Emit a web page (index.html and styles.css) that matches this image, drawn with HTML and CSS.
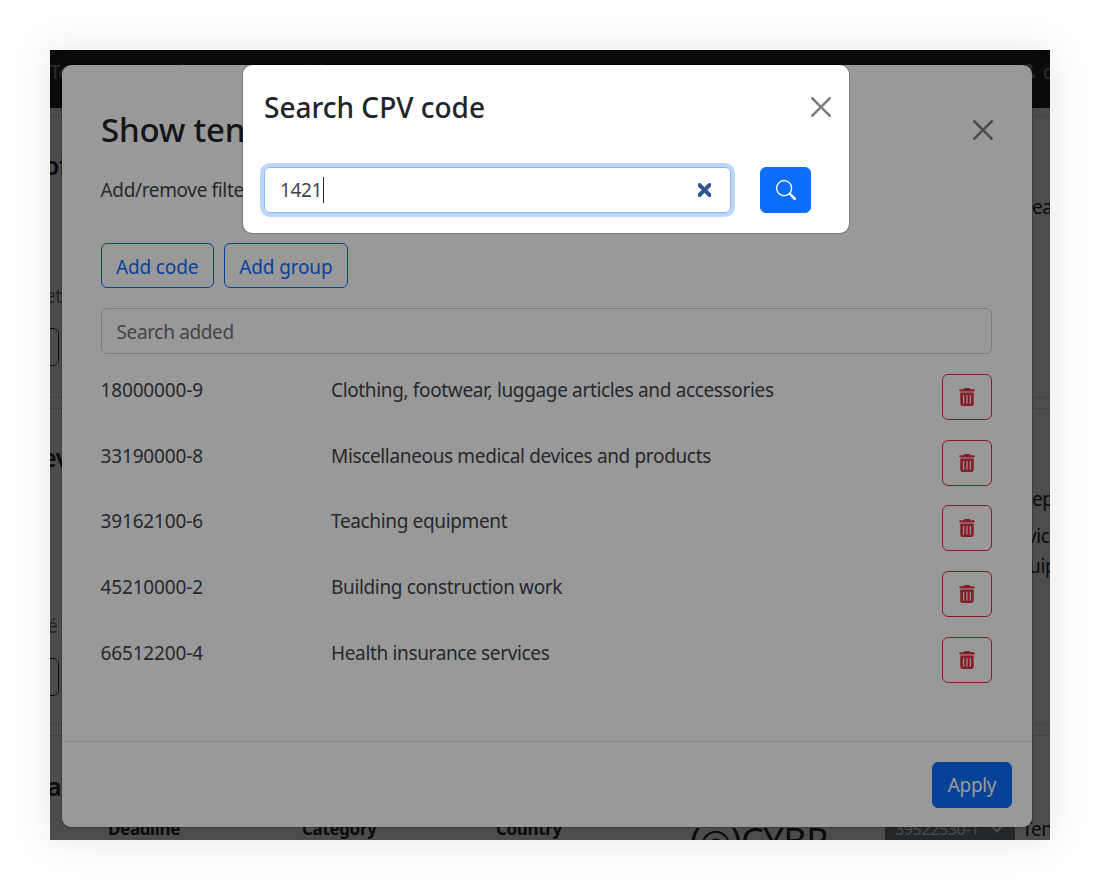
FILE: index.html
```html
<!DOCTYPE html>
<html lang="en">
<head>
    <meta charset="UTF-8">
    <title>Search CPV code</title>
    <link rel="stylesheet" href="styles.css">
</head>
<body>
    <div class="screen">
        <div class="page">
            <nav class="page-nav">
                <span>Te</span>
                <span class="page-nav__gap">About us</span>
                <span>Pricing</span>
                <span>Contact</span>
                <span class="page-nav__user">Lo</span>
                <svg class="page-nav__icon" viewBox="0 0 16 16"><path d="M8 8a3.5 3.5 0 1 0 0-7 3.5 3.5 0 0 0 0 7zm-6 7c0-3 2.5-5.500 6-5.500s6 2.500 6 5.500z"/></svg>
                <span class="page-nav__tail">c</span>
            </nav>
            <section class="page-section page-section--first">
                <div class="page-left">
                    <div class="page-heading page-heading--first">of</div>
                    <div class="page-label page-label--first">et</div>
                    <div class="page-select"></div>
                </div>
                <div class="page-right">
                    <div class="page-text page-text--first">ea</div>
                </div>
            </section>
            <section class="page-section page-section--second">
                <div class="page-left">
                    <div class="page-heading page-heading--second">ev</div>
                    <div class="page-label page-label--second">é</div>
                    <div class="page-select"></div>
                </div>
                <div class="page-right">
                    <div class="page-text page-text--second">ep</div>
                    <div class="page-text page-text--third">vic</div>
                    <div class="page-text page-text--fourth">uip</div>
                </div>
            </section>
            <section class="page-section page-section--third">
                <div class="page-heading page-heading--third">a</div>
                <div class="tender-head">
                    <span class="tender-col">Deadline</span>
                    <span class="tender-col">Category</span>
                    <span class="tender-col tender-col--country">Country</span>
                    <span class="tender-logo">(◎)CYBR</span>
                    <span class="tender-code">39522530-1 <i class="tender-chevron"></i></span>
                    <span class="tender-tail">Ten</span>
                </div>
            </section>
        </div>

        <div class="backdrop backdrop--first"></div>
        <div class="modal modal--filter">
            <header class="filter-head">
                <h2 class="filter-title">Show tenders by CPV</h2>
                <button class="btn-close" type="button">
                    <svg viewBox="0 0 16 16" width="20" height="20"><path d="M.293.293a1 1 0 0 1 1.414 0L8 6.586 14.293.293a1 1 0 1 1 1.414 1.414L9.414 8l6.293 6.293a1 1 0 0 1-1.414 1.414L8 9.414l-6.293 6.293a1 1 0 0 1-1.414-1.414L6.586 8 .293 1.707a1 1 0 0 1 0-1.414"/></svg>
                </button>
            </header>
            <div class="filter-body">
                <p class="filter-hint">Add/remove filters</p>
                <div class="filter-actions">
                    <button class="btn btn--outline" type="button">Add code</button>
                    <button class="btn btn--outline" type="button">Add group</button>
                </div>
                <input class="filter-search" type="text" placeholder="Search added">
                <div class="code-list">
                    <div class="code-row">
                        <span class="code-row__code">18000000-9</span>
                        <span class="code-row__name">Clothing, footwear, luggage articles and accessories</span>
                        <button class="btn btn--danger" type="button"><svg class="trash" viewBox="0 0 448 512"><use href="#trash-icon"/></svg></button>
                    </div>
                    <div class="code-row">
                        <span class="code-row__code">33190000-8</span>
                        <span class="code-row__name">Miscellaneous medical devices and products</span>
                        <button class="btn btn--danger" type="button"><svg class="trash" viewBox="0 0 448 512"><use href="#trash-icon"/></svg></button>
                    </div>
                    <div class="code-row">
                        <span class="code-row__code">39162100-6</span>
                        <span class="code-row__name">Teaching equipment</span>
                        <button class="btn btn--danger" type="button"><svg class="trash" viewBox="0 0 448 512"><use href="#trash-icon"/></svg></button>
                    </div>
                    <div class="code-row">
                        <span class="code-row__code">45210000-2</span>
                        <span class="code-row__name">Building construction work</span>
                        <button class="btn btn--danger" type="button"><svg class="trash" viewBox="0 0 448 512"><use href="#trash-icon"/></svg></button>
                    </div>
                    <div class="code-row">
                        <span class="code-row__code">66512200-4</span>
                        <span class="code-row__name">Health insurance services</span>
                        <button class="btn btn--danger" type="button"><svg class="trash" viewBox="0 0 448 512"><use href="#trash-icon"/></svg></button>
                    </div>
                </div>
            </div>
            <footer class="filter-foot">
                <button class="btn btn--primary btn--apply" type="button">Apply</button>
            </footer>
        </div>

        <div class="backdrop backdrop--second"></div>
        <div class="modal modal--search">
            <header class="search-head">
                <h2 class="search-title">Search CPV code</h2>
                <button class="btn-close" type="button">
                    <svg viewBox="0 0 16 16" width="20" height="20"><path d="M.293.293a1 1 0 0 1 1.414 0L8 6.586 14.293.293a1 1 0 1 1 1.414 1.414L9.414 8l6.293 6.293a1 1 0 0 1-1.414 1.414L8 9.414l-6.293 6.293a1 1 0 0 1-1.414-1.414L6.586 8 .293 1.707a1 1 0 0 1 0-1.414"/></svg>
                </button>
            </header>
            <div class="search-body">
                <div class="search-field">
                    <span class="search-field__value">1421</span><span class="search-field__caret"></span>
                    <svg class="search-field__clear" viewBox="0 0 320 512"><path d="M310.6 150.6c12.5-12.5 12.5-32.8 0-45.3s-32.8-12.5-45.3 0L160 210.7 54.6 105.4c-12.5-12.5-32.8-12.5-45.3 0s-12.5 32.8 0 45.3L114.7 256 9.4 361.4c-12.5 12.5-12.5 32.8 0 45.3s32.8 12.5 45.3 0L160 301.3 265.4 406.6c12.5 12.5 32.8 12.5 45.3 0s12.5-32.8 0-45.3L205.3 256 310.6 150.6z"/></svg>
                </div>
                <button class="btn btn--primary btn--search" type="button">
                    <svg viewBox="0 0 16 16" width="20" height="20"><path d="M11.742 10.344a6.500 6.500 0 1 0-1.397 1.398h-.001c.03.04.062.078.098.115l3.850 3.850a1 1 0 0 0 1.415-1.414l-3.850-3.850a1.007 1.007 0 0 0-.115-.1zM12 6.500a5.500 5.500 0 1 1-11 0 5.500 5.500 0 0 1 11 0z"/></svg>
                </button>
            </div>
        </div>
    </div>

    <svg class="icon-defs" width="0" height="0">
        <symbol id="trash-icon" viewBox="0 0 448 512">
            <path d="M135.2 17.7C140.6 6.8 151.7 0 163.8 0H284.2c12.1 0 23.2 6.8 28.6 17.7L320 32h96c17.7 0 32 14.3 32 32s-14.3 32-32 32H32C14.3 96 0 81.7 0 64S14.3 32 32 32h96l7.2-14.3zM32 128H416V448c0 35.3-28.7 64-64 64H96c-35.3 0-64-28.7-64-64V128zm96 64c-8.8 0-16 7.2-16 16V432c0 8.8 7.2 16 16 16s16-7.2 16-16V208c0-8.8-7.2-16-16-16zm96 0c-8.8 0-16 7.2-16 16V432c0 8.8 7.2 16 16 16s16-7.2 16-16V208c0-8.8-7.2-16-16-16zm96 0c-8.8 0-16 7.2-16 16V432c0 8.8 7.2 16 16 16s16-7.2 16-16V208c0-8.8-7.2-16-16-16z"/>
        </symbol>
    </svg>
</body>
</html>
```

FILE: styles.css
```css
* {
    box-sizing: border-box;
}

body {
    margin: 0;
    padding: 50px;
    background-color: white;
    color: #212529;
    font-family: "Noto Sans", "Open Sans", sans-serif;
    font-size: 19px;
    line-height: 30px;
    letter-spacing: -0.35px;
}

.screen {
    position: relative;
    width: 1000px;
    height: 790px;
    overflow: hidden;
    box-shadow: 0 0 40px rgba(0, 0, 0, 0.1);
    isolation: isolate;
}

.icon-defs {
    position: absolute;
}

/* page behind the dialogs */
.page {
    height: 100%;
    background-color: #ffffff;
}

.page-nav {
    display: flex;
    gap: 40px;
    height: 58px;
    padding: 7px 0 0 0;
    background-color: #212529;
    color: rgba(255, 255, 255, 0.55);
}

.page-nav__gap {
    margin-left: 60px;
}

.page-nav__user {
    margin-left: auto;
    margin-right: 10px;
}

.page-nav__icon {
    width: 16px;
    height: 18px;
    margin: 5px 0 0 0;
    fill: rgba(255, 255, 255, 0.55);
}

.page-nav__tail {
    margin-right: 0;
    margin-left: -34px;
    width: 7px;
}

.page-section {
    display: flex;
    justify-content: space-between;
    border-top: 1px solid #dee2e6;
    border-bottom: 1px solid #dee2e6;
}

.page-section--first {
    height: 283px;
    margin-top: 7px;
}

.page-section--second {
    height: 317px;
    margin-top: 10px;
}

.page-section--third {
    display: block;
    height: 200px;
    margin-top: 10px;
}

.page-left {
    width: 10px;
    white-space: nowrap;
}

.page-right {
    width: 18px;
    white-space: nowrap;
}

.page-heading {
    font-size: 25px;
    font-weight: 600;
    margin-left: -6px;
}

.page-heading--first {
    margin-top: 34px;
}

.page-heading--second {
    margin-top: 33px;
    margin-left: -8px;
}

.page-heading--third {
    margin-top: 35px;
    margin-left: -3px;
}

.page-label {
    color: #6c757d;
}

.page-label--first {
    margin-top: 101px;
    margin-left: -5px;
}

.page-label--second {
    margin-top: 139px;
    margin-left: -3px;
}

.page-select {
    width: 29px;
    height: 38px;
    margin: 17px 0 0 -20px;
    border: 1px solid #212529;
    border-radius: 6px;
}

.page-text--first {
    margin-top: 76px;
}

.page-text--second {
    margin-top: 75px;
}

.page-text--third {
    margin-top: 7px;
    margin-left: -5px;
}

.page-text--fourth {
    margin-left: -3px;
}

.tender-head {
    display: flex;
    align-items: flex-start;
    height: 40px;
    margin-top: 13px;
    padding-left: 58px;
    white-space: nowrap;
}

.tender-col {
    flex: none;
    width: 194px;
    font-size: 17px;
    font-weight: 700;
}

.tender-col--country {
    width: 194px;
}

.tender-logo {
    flex: none;
    width: 195px;
    margin-top: 2px;
    font-size: 36px;
    line-height: 50px;
    letter-spacing: -0.5px;
}

.tender-code {
    display: flex;
    align-items: center;
    gap: 14px;
    flex: none;
    width: 130px;
    height: 30px;
    padding-left: 10px;
    background-color: #7b858f;
    color: white;
    font-size: 16px;
}

.tender-chevron {
    width: 8px;
    height: 8px;
    margin-top: -4px;
    border-right: 2px solid white;
    border-bottom: 2px solid white;
    transform: rotate(45deg);
}

.tender-tail {
    margin-left: 7px;
}

/* dialogs */
.backdrop {
    position: absolute;
    inset: 0;
    background-color: black;
}

.backdrop--first {
    opacity: 0.5;
}

.backdrop--second {
    opacity: 0.4;
}

.modal {
    position: absolute;
    display: flex;
    flex-direction: column;
    background-color: white;
    border: 1px solid rgba(0, 0, 0, 0.2);
    border-radius: 10px;
    background-clip: padding-box;
}

.modal--filter {
    top: 14px;
    left: 11px;
    width: 972px;
    height: 764px;
}

.modal--search {
    top: 14px;
    left: 192px;
    width: 608px;
    height: 169.5px;
}

.btn-close {
    display: flex;
    padding: 0;
    border: 0;
    background: none;
    opacity: 0.5;
}

.btn {
    font: inherit;
    letter-spacing: inherit;
    border-radius: 6px;
    background: none;
}

.btn--outline {
    height: 45px;
    padding: 2px 14.5px 0;
    border: 1px solid #0d6efd;
    color: #0d6efd;
    letter-spacing: -0.15px;
}

.btn--danger {
    display: flex;
    align-items: center;
    justify-content: center;
    flex: none;
    width: 50px;
    height: 46px;
    padding: 0;
    border: 1px solid #dc3545;
}

.btn--primary {
    border: 1px solid #0d6efd;
    background-color: #0d6efd;
    color: white;
}

.trash {
    width: 16px;
    height: 18px;
    fill: #dc3545;
}

/* first dialog */
.filter-head {
    display: flex;
    align-items: center;
    justify-content: space-between;
    height: 101px;
    padding: 28px 39px 0 39px;
}

.filter-title {
    margin: 0;
    font-size: 33px;
    font-weight: 500;
    letter-spacing: -0.2px;
    white-space: nowrap;
}

.filter-body {
    flex: 1;
    padding: 9px 40px 0 38.5px;
    color: #40454a;
}

.filter-hint {
    margin: 0 0 38px;
}

.filter-actions {
    display: flex;
    gap: 10px;
    margin-bottom: 20px;
}

.filter-search {
    display: block;
    width: 100%;
    height: 46px;
    margin-bottom: 20px;
    padding: 2px 15px 0;
    border: 1px solid #ced4da;
    border-radius: 6px;
    font: inherit;
    letter-spacing: inherit;
}

.filter-search::placeholder {
    color: #6c757d;
}

.code-list {
    display: grid;
    gap: 19.7px;
}

.code-row {
    display: flex;
    align-items: flex-start;
}

.code-row__code {
    width: 230.5px;
    padding-top: 1px;
    flex: none;
    letter-spacing: -0.15px;
}

.code-row__name {
    flex: 1;
    padding-top: 1px;
}

.filter-foot {
    display: flex;
    justify-content: flex-end;
    height: 86px;
    padding: 20px 20px 0;
    border-top: 1px solid #dee2e6;
}

.btn--apply {
    width: 80px;
    height: 46px;
    padding: 0;
}

/* second dialog */
.search-head {
    display: flex;
    align-items: center;
    justify-content: space-between;
    height: 84px;
    padding: 0 18px 0 21px;
}

.search-title {
    margin: 0;
    font-size: 28px;
    font-weight: 500;
    letter-spacing: 0;
}

.search-body {
    display: flex;
    gap: 29px;
    padding: 18px 0 0 21px;
}

.search-field {
    display: flex;
    align-items: center;
    width: 467px;
    height: 46px;
    padding: 0 19px 0 15px;
    border: 1px solid #86b7fe;
    border-radius: 6px;
    box-shadow: 0 0 0 4px rgba(13, 110, 253, 0.28);
    color: #40454a;
}

.search-field__caret {
    width: 1px;
    height: 26px;
    margin-left: 1px;
    background-color: #212529;
}

.search-field__clear {
    width: 13px;
    height: 20px;
    margin-left: auto;
    fill: #2e5394;
    stroke: #2e5394;
    stroke-width: 36px;
}

.btn--search {
    display: flex;
    align-items: center;
    justify-content: center;
    width: 51px;
    height: 46px;
    padding: 0;
    fill: white;
}
```
